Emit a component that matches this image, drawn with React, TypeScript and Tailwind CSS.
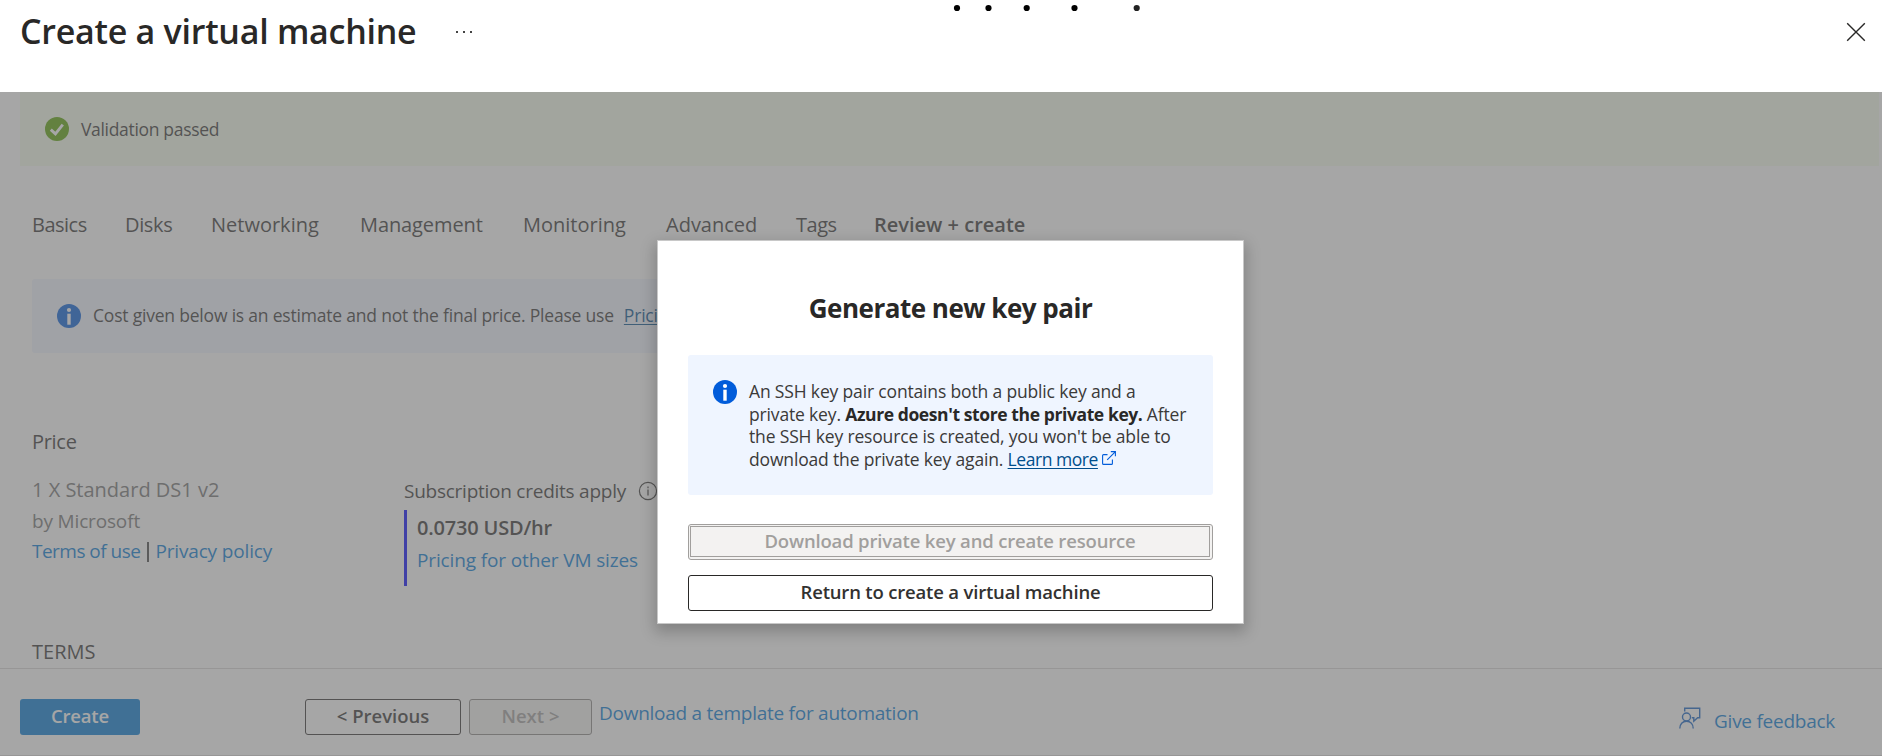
import type { ReactNode } from 'react';

const tabs = [
  { label: 'Basics', box: 'w-[93px] tracking-[-0.5px]' },
  { label: 'Disks', box: 'w-[86px] tracking-[-0.35px]' },
  { label: 'Networking', box: 'w-[149px]' },
  { label: 'Management', box: 'w-[163px] tracking-[-0.1px]' },
  { label: 'Monitoring', box: 'w-[143px]' },
  { label: 'Advanced', box: 'w-[130px]' },
  { label: 'Tags', box: 'w-[78px] tracking-[-0.5px]' },
  { label: 'Review + create', box: 'font-semibold' },
];

function InfoIcon() {
  return (
    <svg viewBox="0 0 24 24" className="size-6 shrink-0">
      <circle cx="12" cy="12" r="12" fill="#015cda" />
      <circle cx="12" cy="6" r="2.1" fill="#fff" />
      <rect x="10.3" y="9.7" width="3.4" height="11" fill="#fff" />
    </svg>
  );
}

function CheckIcon() {
  return (
    <svg viewBox="0 0 24 24" className="size-6 shrink-0">
      <circle cx="12" cy="12" r="12" fill="#57a300" />
      <path d="M5.8 12.6 10.4 16.8 17.8 7.6" fill="none" stroke="#fff" strokeWidth="2.9" />
    </svg>
  );
}

function OutlineInfo() {
  return (
    <svg viewBox="0 0 20 20" className="size-5 shrink-0" fill="none" stroke="#323130" strokeWidth="1.2">
      <circle cx="10" cy="10" r="8.6" />
      <path d="M10 8.6V14.6M10 5.6V7.2" />
    </svg>
  );
}

function FeedbackIcon() {
  return (
    <svg viewBox="0 0 22 22" className="mt-px size-[22px]" fill="none" stroke="#0f5fc4" strokeWidth="1.4">
      <path d="M5.7 4.5V1.2H20.7V10.8H18.6L14.8 14.2V10.8H12.8" />
      <circle cx="7.5" cy="10" r="4" />
      <path d="M.8 21.5C.8 17.2 3.5 14.2 7.5 14.2S14.2 17.2 14.2 21.5" />
    </svg>
  );
}

function ExternalIcon() {
  return (
    <svg viewBox="0 0 14 14" className="ml-[4px] inline-block size-[14px] align-[1px]" fill="none" stroke="#015cda" strokeWidth="1.1">
      <path d="M5.5 3.6H1.6Q.6 3.6.6 4.6V12.4Q.6 13.4 1.6 13.4H9.4Q10.4 13.4 10.4 12.4V8.6" />
      <path d="M5.2 8.8 13.2.8M8.8.6H13.4V5.2" />
    </svg>
  );
}

function Link({ children, className = '' }: { children: ReactNode; className?: string }) {
  return <a className={`text-[#0078d4] ${className}`}>{children}</a>;
}

function Header() {
  return (
    <header className="relative flex h-[92px] shrink-0 items-start bg-white pl-5 pr-[16px]">
      <h1 className="h-[62px] text-[34px] font-semibold leading-[62px] tracking-[-0.26px] text-[#292827]">
        Create a virtual machine
      </h1>
      <div className="ml-[40px] mt-[31px] flex gap-[5px]">
        <span className="size-[2px] bg-[#444]" />
        <span className="size-[2px] bg-[#444]" />
        <span className="size-[2px] bg-[#444]" />
      </div>
      <svg viewBox="0 0 20 20" className="ml-auto mt-[22px] size-5" stroke="#292827" strokeWidth="1.4">
        <path d="M1.2 1.2 18.8 18.8M18.8 1.2 1.2 18.8" />
      </svg>
      <svg viewBox="0 0 200 12" className="absolute left-[950px] top-[2px] h-3 w-[200px]">
        <circle cx="7" cy="6" r="3.1" />
        <circle cx="38.5" cy="6" r="3.1" />
        <circle cx="76.7" cy="6" r="3.1" />
        <circle cx="124.5" cy="6" r="3.1" />
        <circle cx="186.7" cy="6" r="3.1" fill="#222" />
      </svg>
    </header>
  );
}

function Pricing() {
  return (
    <section className="ml-8 mt-[75px] h-[209px]">
      <h2 className="text-xl leading-7 tracking-[-0.3px]">Price</h2>
      <div className="flex">
        <div className="w-[372px] pt-5 text-[19px] leading-7 text-[#737373]">
          <p className="text-xl leading-7">1 X Standard DS1 v2</p>
          <p className="mt-[3px] tracking-[-0.16px]">by Microsoft</p>
          <p className="mt-0.5 flex items-center text-[#323130]">
            <Link className="tracking-[-0.52px]">Terms of use</Link>
            <span className="ml-[7px] mr-[6px] mt-[2px] h-5 w-[2px] bg-[#444]" />
            <Link className="tracking-[-0.15px]">Privacy policy</Link>
          </p>
        </div>
        <div className="pt-[21px] text-[19px] leading-7">
          <div className="flex items-center gap-[12px] tracking-[-0.25px]">
            Subscription credits apply
            <OutlineInfo />
          </div>
          <div className="mt-[5px] h-[76px] border-l-[3px] border-[#0000ff] pl-[10px] pt-[4px]">
            <p className="text-xl font-semibold leading-7 tracking-[-0.19px]">0.0730 USD/hr</p>
            <Link className="mt-[4px] block tracking-[-0.13px]">Pricing for other VM sizes</Link>
          </div>
        </div>
      </div>
    </section>
  );
}

function Footer() {
  return (
    <footer className="flex h-[88px] items-start border-b border-t border-[#dad8d6] pl-5 pt-[30px] text-[18.5px] font-semibold leading-[33px]">
      <button className="h-9 w-[120px] rounded-[3px] bg-[#0078d4] pb-[3px] leading-[33px] tracking-[-0.2px] text-white">Create</button>
      <button className="ml-[165px] h-9 w-[156px] rounded-[3px] border border-[#323130] pb-[3px] leading-[31px]">&lt; Previous</button>
      <button className="ml-2 h-9 w-[123px] rounded-[3px] border border-[#8a8886] bg-[#f3f2f1] pb-[3px] leading-[31px] text-[#a19f9d]">Next &gt;</button>
      <Link className="ml-[7px] text-[19px] font-normal leading-7 tracking-[-0.26px]">Download a template for automation</Link>
      <div className="ml-auto mr-[47px] mt-[7px] flex gap-[13px]">
        <FeedbackIcon />
        <Link className="mt-px text-[19px] font-normal leading-7 tracking-[-0.26px]">Give feedback</Link>
      </div>
    </footer>
  );
}

function KeyPairDialog() {
  return (
    <div role="dialog" className="absolute left-[657px] top-[240px] flex h-[384px] w-[587px] flex-col border border-[#c8c8c8] bg-white px-[30px] text-[#323130] shadow-[0_6px_14px_2px_rgba(0,0,0,0.22)]">
      <h2 className="mt-[48px] h-[38px] text-center text-[26px] font-bold leading-[38px] tracking-[-0.5px] text-[#292827]">
        Generate new key pair
      </h2>
      <div className="mt-[28px] flex h-[140px] gap-3 rounded-[3px] bg-[#eff5ff] pl-[25px] pt-[25px]">
        <InfoIcon />
        <p className="whitespace-nowrap text-[17.5px] leading-[22.7px] tracking-[-0.16px] text-[#3b3a39]">
          An SSH key pair contains both a public key and a<br />
          private key. <b className="font-bold tracking-[-0.4px] text-[#292827]">Azure doesn't store the private key.</b> After<br />
          the SSH key resource is created, you won't be able to<br />
          download the private key again.{' '}
          <a className="tracking-[-0.45px] text-[#004e8c] underline underline-offset-2">Learn more</a>
          <ExternalIcon />
        </p>
      </div>
      <button className="mt-[29px] h-9 w-full shrink-0 rounded-[3px] border border-[#a19f9d] bg-[#f3f2f1] pb-[2px] pl-px pr-[2px] pt-px text-[18.5px] font-semibold tracking-[-0.17px] text-[#a19f9d]">
        <span className="block h-[31px] border border-[#a19f9d] leading-[27px]">Download private key and create resource</span>
      </button>
      <button className="mt-[15px] h-9 w-full shrink-0 rounded-[3px] border border-[#292827] pb-[3px] text-[18.5px] font-semibold leading-[31px] tracking-[-0.18px]">
        Return to create a virtual machine
      </button>
    </div>
  );
}

export default function App() {
  return (
    <div className="relative flex h-[756px] w-full flex-col overflow-hidden bg-white font-['Open_Sans',sans-serif] text-[#323130]">
      <Header />
      <main className="relative h-[664px] overflow-hidden">
        <div className="ml-5 mr-[3px] flex h-[74px] items-center bg-[#f5fceb] pl-[25px] text-[17.5px] tracking-[-0.32px]">
          <CheckIcon />
          <span className="ml-[12px] mt-px">Validation passed</span>
        </div>
        <nav className="ml-8 mt-[45px] flex h-7 whitespace-nowrap text-xl leading-7">
          {tabs.map((tab) => (
            <a key={tab.label} className={tab.box}>{tab.label}</a>
          ))}
        </nav>
        <div className="ml-8 mt-[40px] flex h-[74px] w-[1180px] items-center rounded-[3px] bg-[#f0f5ff] pl-[25px] text-[17.5px] tracking-[-0.2px]">
          <InfoIcon />
          <span className="-mt-px ml-3">Cost given below is an estimate and not the final price. Please use</span>
          <a className="-mt-px ml-[10px] text-[#004e8c] underline underline-offset-2">Pricing calculator</a>
        </div>
        <Pricing />
        <h2 className="ml-8 h-[31px] pt-px text-xl leading-7">TERMS</h2>
        <Footer />
        <div className="absolute inset-0 bg-[#6b6b6b]/60" />
      </main>
      <KeyPairDialog />
    </div>
  );
}
